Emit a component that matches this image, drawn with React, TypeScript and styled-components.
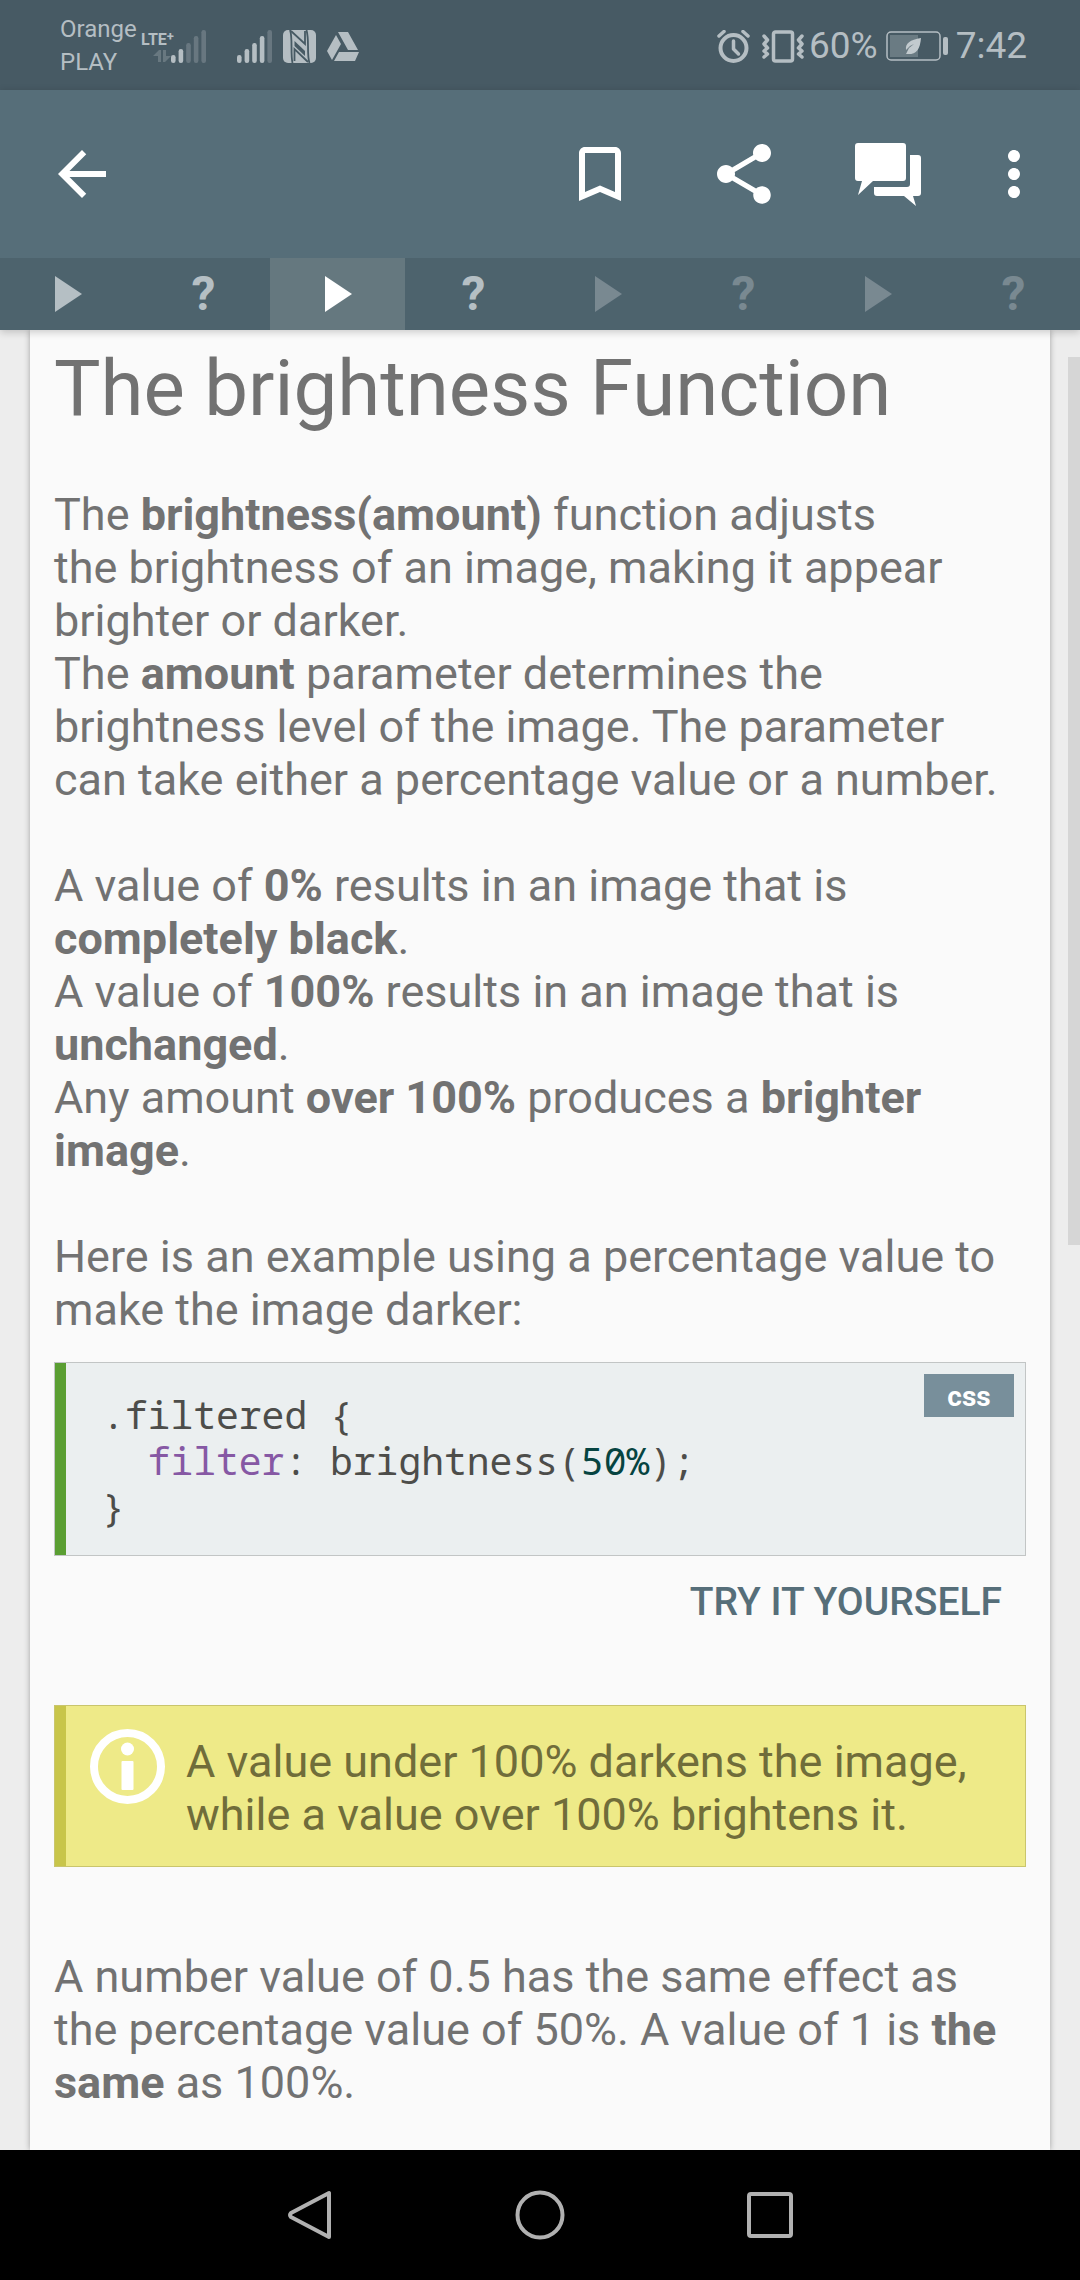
import React from "react";
import styled, { createGlobalStyle } from "styled-components";

const GlobalStyle = createGlobalStyle`
  *, *::before, *::after { box-sizing: border-box; }
  body { margin: 0; background: #ededed; }
  button { margin: 0; padding: 0; border: 0; background: none; font: inherit; color: inherit; cursor: pointer; }
`;

const Screen = styled.div`
  display: flex;
  flex-direction: column;
  min-height: 100vh;
  font-family: Roboto, "Noto Sans", sans-serif;
  color: #727272;
`;

/* ---------- status bar ---------- */

const StatusBar = styled.div`
  display: flex;
  align-items: center;
  justify-content: space-between;
  height: 90px;
  padding: 2px 53px 0 60px;
  background: #475a64;
  color: #b5bec3;
`;

const StatusGroup = styled.div`
  display: flex;
  align-items: center;
  gap: ${(p: { $gap: number }) => p.$gap}px;
`;

const Carrier = styled.div`
  width: 80px;
  font-size: 24px;
  line-height: 33px;
`;

const Network = styled.div`
  display: flex;
  margin-right: 30px;
`;

const NetworkType = styled.div`
  display: flex;
  flex-direction: column;
  align-items: flex-end;
  width: 30px;
  font-size: 16px;
  font-weight: 700;
  line-height: 20px;
`;

const NetworkLabel = styled.span`
  display: flex;
  align-self: flex-start;
  white-space: nowrap;
`;

const Plus = styled.span`
  font-size: 13px;
  line-height: 13px;
`;

const Reading = styled.span`
  font-size: 37px;
  line-height: 44px;
`;

const Icon = styled.svg`
  display: block;
  flex: none;
`;

/* ---------- app bar ---------- */

const Header = styled.header`
  position: relative;
  z-index: 1;
  background: #566e79;
  box-shadow: 0 2px 8px rgba(0, 0, 0, 0.2);
`;

const Toolbar = styled.div`
  display: flex;
  align-items: center;
  height: 168px;
  padding: 0 12px 0 46px;
  color: #ffffff;
`;

const ToolButton = styled.button<{ $width: number }>`
  display: flex;
  align-items: center;
  justify-content: center;
  width: ${(p) => p.$width}px;
  height: 144px;
`;

const Spacer = styled.div`
  flex: 1;
`;

const Tabs = styled.nav`
  display: grid;
  grid-template-columns: repeat(8, 1fr);
  background: #4d636d;
`;

type TabState = "done" | "current" | "locked";

const tabColor = { done: "#b5bfc4", current: "#ffffff", locked: "#798991" };

const Tab = styled.button<{ $state: TabState }>`
  display: flex;
  align-items: center;
  justify-content: center;
  height: 72px;
  padding-left: 2px;
  font-size: 48px;
  font-weight: 700;
  line-height: 72px;
  color: ${(p) => tabColor[p.$state]};
  background: ${(p) => (p.$state === "current" ? "#65787f" : "transparent")};
`;

/* ---------- lesson ---------- */

const Content = styled.main`
  position: relative;
  display: flex;
  flex: 1;
  padding: 0 30px;
  background: #ededed;
`;

const ScrollThumb = styled.div`
  position: absolute;
  top: 27px;
  right: 0;
  width: 12px;
  height: 888px;
  background: #d6d6d6;
`;

const Card = styled.article`
  flex: 1;
  min-width: 0;
  padding: 13px 24px 40px;
  background: #fafafa;
  box-shadow: 0 0 6px rgba(0, 0, 0, 0.32);

  > :last-child {
    margin-bottom: 0;
  }
`;

const Title = styled.h1`
  margin: 0 0 53px;
  font-size: 78px;
  font-weight: 400;
  line-height: 92px;
`;

const Paragraph = styled.p`
  margin: 0 0 53px;
  font-size: 45px;
  line-height: 53px;
`;

const LeadIn = styled(Paragraph)`
  margin-bottom: 26px;
`;

const CodeBlock = styled.div`
  display: flex;
  align-items: flex-start;
  justify-content: space-between;
  padding: 11px;
  padding-left: 34px;
  border: 1px solid #c2c5c5;
  background: #ebeff0;
  box-shadow: inset 11px 0 0 #5a9e32;
`;

const Code = styled.pre`
  margin: 0;
  padding: 17px 0 15px 13px;
  font-family: "Droid Sans Mono", "Noto Sans Mono", "DejaVu Sans Mono", monospace;
  font-size: 38px;
  line-height: 46px;
  color: #4d4d4a;
`;

const Property = styled.span`
  color: #8658a4;
`;

const Value = styled.span`
  color: #064441;
`;

const Language = styled.span`
  width: 90px;
  padding-top: 2px;
  font-size: 28px;
  font-weight: 700;
  line-height: 41px;
  text-align: center;
  color: #ffffff;
  background: #788f9b;
`;

const Actions = styled.div`
  display: flex;
  justify-content: flex-end;
  padding: 12px 24px 0;
  margin-bottom: 68px;
`;

const TryButton = styled.button`
  font-size: 39px;
  font-weight: 500;
  line-height: 69px;
  color: #566e79;
`;

const Note = styled.aside`
  display: flex;
  gap: 21px;
  margin-bottom: 83px;
  padding: 23px 24px 23px 35px;
  border: 1px solid #c9c56c;
  background: #eeea88;
  box-shadow: inset 11px 0 0 #c8c54a;
  color: #706d3a;
`;

const NoteText = styled.p`
  margin: 0;
  padding: 6px 0 2px;
  font-size: 45px;
  line-height: 53px;
`;

/* ---------- navigation bar ---------- */

const NavBar = styled.footer`
  display: flex;
  justify-content: center;
  background: #000000;
  color: #b1b1b1;
`;

const NavButton = styled.button`
  display: flex;
  align-items: center;
  justify-content: center;
  width: 230px;
  height: 130px;
`;

const barTops = [25, 19, 13, 6, 0];

function Signal({ level }: { level: number }) {
  return (
    <Icon width="35" height="33" viewBox="0 0 35 33" fill="currentColor">
      {barTops.map((top, i) => (
        <rect
          key={top}
          x={i * 7.6}
          y={top}
          width="4.6"
          height={33 - top}
          rx="2.2"
          opacity={i < level ? 1 : 0.3}
        />
      ))}
    </Icon>
  );
}

function MaterialIcon({ d }: { d: string }) {
  return (
    <Icon width="72" height="72" viewBox="0 0 24 24" fill="currentColor">
      <path d={d} />
    </Icon>
  );
}

const lessons: { kind: "video" | "quiz"; state: TabState }[] = [
  { kind: "video", state: "done" },
  { kind: "quiz", state: "done" },
  { kind: "video", state: "current" },
  { kind: "quiz", state: "done" },
  { kind: "video", state: "locked" },
  { kind: "quiz", state: "locked" },
  { kind: "video", state: "locked" },
  { kind: "quiz", state: "locked" },
];

export default function App() {
  return (
    <Screen>
      <GlobalStyle />
      <StatusBar>
        <StatusGroup $gap={11}>
          <StatusGroup $gap={1}>
            <Carrier>Orange PLAY</Carrier>
            <Network>
              <NetworkType>
                <NetworkLabel>
                  LTE<Plus>+</Plus>
                </NetworkLabel>
                <Icon width="18" height="13" viewBox="0 0 18 13" fill="currentColor" opacity="0.3">
                  <path d="M6 0h2v12H5V6H0zM10 0h3v6h5l-6 6h-2z" />
                </Icon>
              </NetworkType>
              <Signal level={2} />
            </Network>
            <Signal level={4} />
          </StatusGroup>
          <Icon width="33" height="33" viewBox="0 0 33 33">
            <rect width="33" height="33" rx="5" fill="#b5bec3" />
            <g fill="none" stroke="#475a64" strokeWidth="1.800">
              <path d="M7 0c1.500 4 1.500 8 1.500 16S8.500 29 9.500 33" />
              <path d="M23.500 0c1 4 1.500 8 1.500 16s0 13 1.500 17" />
              <path d="M8 1l14 13V1" />
              <path d="M25 32L11.500 19v12" />
            </g>
            <path d="M11.500 11v5L22 26v-5z" fill="#475a64" />
          </Icon>
          <Icon width="33" height="29" viewBox="0 0 33 29" fill="currentColor">
            <path d="M9 3l5 9L5 28 0 19zM11 0h10l10 18H21zM12 20h20l-4 9H7z" />
          </Icon>
        </StatusGroup>
        <StatusGroup $gap={8}>
          <StatusGroup $gap={12}>
            <Icon width="33" height="33" viewBox="0 0 33 33" fill="none" stroke="currentColor" strokeLinecap="round">
              <circle cx="16.500" cy="18" r="13" strokeWidth="4" />
              <path d="M16.500 11v8l5 5" strokeWidth="3.500" strokeLinejoin="round" />
              <path d="M2 6l5-4.500M31 6l-5-4.500" strokeWidth="3.500" />
            </Icon>
            <StatusGroup $gap={5}>
              <Icon
                width="42"
                height="33"
                viewBox="0 0 42 33"
                fill="none"
                stroke="currentColor"
                strokeWidth="3.500"
                strokeLinecap="round"
                strokeLinejoin="round"
              >
                <rect x="11.500" y="2" width="19" height="29" rx="2" />
                <path d="M2 6l3.500 4L2 14l3.500 4L2 21l3.500 3L2 27" />
                <path d="M40 6l-3.500 4L40 14l-3.500 4L40 21l-3.500 3L40 27" />
              </Icon>
              <Reading>60%</Reading>
            </StatusGroup>
          </StatusGroup>
          <Icon width="62" height="30" viewBox="0 0 62 30">
            <rect x="1" y="1" width="53" height="28" rx="4" fill="none" stroke="#b5bec3" strokeWidth="1.500" />
            <rect x="4" y="4" width="28" height="22" fill="#6a7b83" />
            <rect x="57" y="6" width="5" height="18" rx="2" fill="#b5bec3" />
            <path d="M35 7c-11 2-16 5-15 12l4-4 4-2-5 4-3 6c10 1 14-4 15-16z" fill="#c2cace" />
          </Icon>
          <Reading>7:42</Reading>
        </StatusGroup>
      </StatusBar>

      <Header>
        <Toolbar>
          <ToolButton $width={72} aria-label="Back">
            <MaterialIcon d="M20 11H7.830l5.590-5.590L12 4l-8 8 8 8 1.410-1.410L7.830 13H20v-2z" />
          </ToolButton>
          <Spacer />
          <ToolButton $width={144} aria-label="Bookmark">
            <MaterialIcon d="M17 3H7c-1.100 0-2 .9-2 2v16l7-3 7 3V5c0-1.100-.9-2-2-2zm0 15l-5-2.180L7 18V5h10v13z" />
          </ToolButton>
          <ToolButton $width={144} aria-label="Share">
            <MaterialIcon d="M18 16.080c-.76 0-1.440.3-1.960.77L8.910 12.700c.05-.23.09-.46.09-.7s-.04-.47-.09-.7l7.050-4.110c.54.5 1.250.81 2.040.81 1.660 0 3-1.340 3-3s-1.340-3-3-3-3 1.340-3 3c0 .24.040.47.090.7L8.040 9.810C7.500 9.310 6.790 9 6 9c-1.660 0-3 1.340-3 3s1.340 3 3 3c.79 0 1.500-.31 2.040-.81l7.120 4.160c-.05.21-.08.43-.08.65 0 1.610 1.310 2.920 2.920 2.920 1.610 0 2.920-1.310 2.920-2.920s-1.310-2.920-2.920-2.920z" />
          </ToolButton>
          <ToolButton $width={144} aria-label="Comments">
            <Icon width="66" height="63" viewBox="0 0 66 63" fill="currentColor">
              <path d="M3 0h45q3 0 3 3v32q0 3-3 3H18L3 52l4-14H3q-3 0-3-3V3q0-3 3-3z" />
              <path d="M55 12h8q3 0 3 3v35q0 3-3 3h-5l3 10-12-10H22q-3 0-3-3v-6h33q3 0 3-3z" />
            </Icon>
          </ToolButton>
          <ToolButton $width={108} aria-label="More options">
            <MaterialIcon d="M12 8c1.100 0 2-.9 2-2s-.9-2-2-2-2 .9-2 2 .9 2 2 2zm0 2c-1.100 0-2 .9-2 2s.9 2 2 2 2-.9 2-2-.9-2-2-2zm0 6c-1.100 0-2 .9-2 2s.9 2 2 2 2-.9 2-2-.9-2-2-2z" />
          </ToolButton>
        </Toolbar>
        <Tabs aria-label="Lesson parts">
          {lessons.map((lesson, i) => (
            <Tab key={i} $state={lesson.state} aria-label={`Part ${i + 1}, ${lesson.kind}`}>
              {lesson.kind === "quiz" ? (
                "?"
              ) : (
                <Icon width="27" height="36" viewBox="0 0 27 36" fill="currentColor">
                  <path d="M0 0l27 18L0 36z" />
                </Icon>
              )}
            </Tab>
          ))}
        </Tabs>
      </Header>

      <Content>
        <Card>
          <Title>The brightness Function</Title>
          <Paragraph>
            The <b>brightness(amount)</b> function adjusts the&nbsp;brightness of an image, making it appear
            brighter or darker.
            <br />
            The <b>amount</b> parameter determines the brightness level of the image. The parameter can take
            either a percentage value or a number.
          </Paragraph>
          <Paragraph>
            A value of <b>0%</b> results in an image that is <b>completely black</b>.
            <br />
            A value of <b>100%</b> results in an image that is <b>unchanged</b>.
            <br />
            Any amount <b>over 100%</b> produces a <b>brighter image</b>.
          </Paragraph>
          <LeadIn>Here is an example using a percentage value to make the image darker:</LeadIn>
          <CodeBlock>
            <Code>
              {".filtered {\n  "}
              <Property>filter</Property>
              {": brightness("}
              <Value>50%</Value>
              {");\n}"}
            </Code>
            <Language>css</Language>
          </CodeBlock>
          <Actions>
            <TryButton>TRY IT YOURSELF</TryButton>
          </Actions>
          <Note>
            <Icon width="75" height="75" viewBox="0 0 75 75" fill="#ffffff">
              <circle cx="37.500" cy="37.500" r="33.500" fill="none" stroke="#ffffff" strokeWidth="8" />
              <circle cx="37.500" cy="20" r="6.500" />
              <rect x="31.500" y="32" width="12" height="29" rx="1" />
            </Icon>
            <NoteText>A value under 100% darkens the image, while a value over 100% brightens it.</NoteText>
          </Note>
          <Paragraph>
            A number value of 0.5 has the same effect as the percentage value of 50%. A value of 1 is{" "}
            <b>the same</b> as 100%.
          </Paragraph>
        </Card>
        <ScrollThumb />
      </Content>

      <NavBar>
        <NavButton aria-label="Back">
          <Icon width="44" height="50" viewBox="0 0 44 50" fill="none" stroke="currentColor" strokeWidth="4" strokeLinejoin="round">
            <path d="M41 3v44L3 27q-2-2 0-4z" />
          </Icon>
        </NavButton>
        <NavButton aria-label="Home">
          <Icon width="50" height="50" viewBox="0 0 50 50" fill="none" stroke="currentColor" strokeWidth="4">
            <circle cx="25" cy="25" r="22.500" />
          </Icon>
        </NavButton>
        <NavButton aria-label="Recent apps">
          <Icon width="46" height="46" viewBox="0 0 46 46" fill="none" stroke="currentColor" strokeWidth="4">
            <rect x="2" y="2" width="42" height="42" rx="2" />
          </Icon>
        </NavButton>
      </NavBar>
    </Screen>
  );
}
